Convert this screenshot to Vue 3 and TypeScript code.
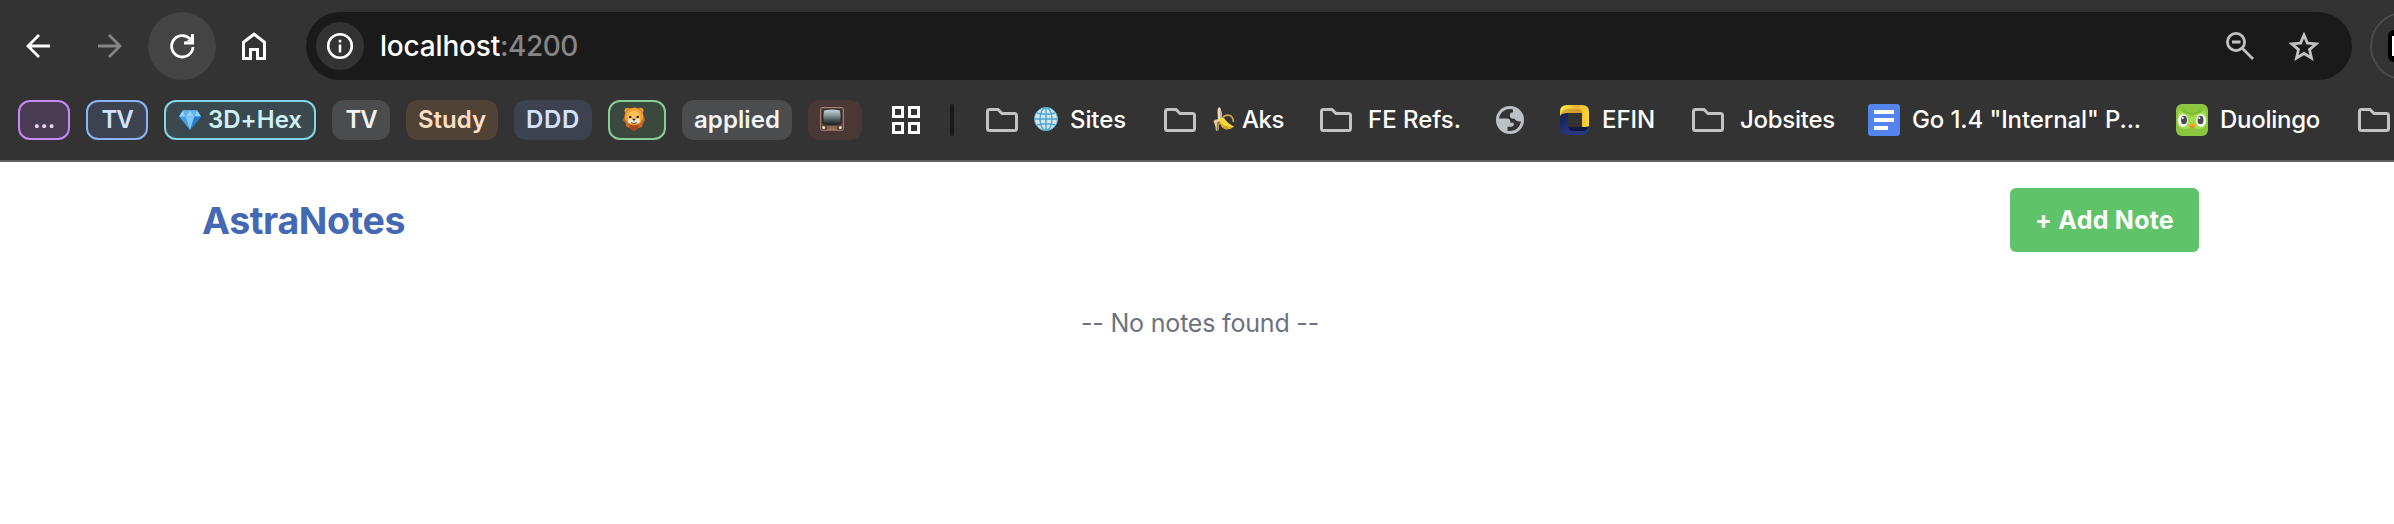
<script setup lang="ts">
import type { Directive } from 'vue'

interface Chip {
  label?: string
  icon?: 'gem' | 'lion' | 'tv'
  tone: string
  width: number
  textWidth: number
}

interface Bookmark {
  icon: 'folder' | 'world' | 'efin' | 'doc' | 'duo'
  emoji?: 'globe' | 'banana'
  label?: string
  width: number
  textWidth: number
}

const chips: Chip[] = [
  { label: '...', tone: 'purple outlined', width: 52, textWidth: 22 },
  { label: 'TV', tone: 'blue outlined', width: 62, textWidth: 31 },
  { label: '3D+Hex', icon: 'gem', tone: 'cyan outlined', width: 152, textWidth: 94 },
  { label: 'TV', tone: 'grey', width: 58, textWidth: 31 },
  { label: 'Study', tone: 'orange', width: 92, textWidth: 68 },
  { label: 'DDD', tone: 'blue', width: 78, textWidth: 54 },
  { icon: 'lion', tone: 'green outlined', width: 58, textWidth: 0 },
  { label: 'applied', tone: 'grey', width: 110, textWidth: 86 },
  { icon: 'tv', tone: 'red', width: 54, textWidth: 0 },
]

const bookmarks: Bookmark[] = [
  { icon: 'folder', emoji: 'globe', label: 'Sites', width: 178, textWidth: 56 },
  { icon: 'folder', emoji: 'banana', label: 'Aks', width: 156, textWidth: 42 },
  { icon: 'folder', label: 'FE Refs.', width: 176, textWidth: 93 },
  { icon: 'world', width: 64, textWidth: 0 },
  { icon: 'efin', label: 'EFIN', width: 132, textWidth: 53 },
  { icon: 'folder', label: 'Jobsites', width: 176, textWidth: 95 },
  { icon: 'doc', label: 'Go 1.4 "Internal" P...', width: 308, textWidth: 229 },
  { icon: 'duo', label: 'Duolingo', width: 182, textWidth: 100 },
  { icon: 'folder', width: 36, textWidth: 0 },
]

// Spreads letter spacing so that a label takes the given advance width.
const vFit: Directive<HTMLElement, number> = {
  mounted(el, { value }) {
    const count = (el.textContent ?? '').length
    const natural = el.getBoundingClientRect().width
    if (count) el.style.letterSpacing = `${(value - natural) / count}px`
  },
}
</script>

<template>
  <div class="window">
    <header class="chrome">
      <div class="toolbar">
        <svg class="nav back" viewBox="0 0 28 28"><path d="M26 14H4M15 3L4 14l11 11" /></svg>
        <svg class="nav forward" viewBox="0 0 28 28"><path d="M0 14h22M11 3l11 11-11 11" /></svg>
        <div class="reload">
          <svg class="nav" viewBox="0 0 28 28">
            <path d="M25 15A10.7 10.7 0 1 1 21.8 6.6L24.5 9.3" />
            <path class="solid" d="M23 2h3v10.5H16v-3h7z" />
            <path class="solid" d="M18 9.5h7v-5z" />
          </svg>
        </div>
        <svg class="home" viewBox="0 0 24 28"><path d="M1.5 10.2L12 2.2l10.5 8V26.5H15.5V17.5H8.5V26.5H1.5z" /></svg>
        <div class="omnibox">
          <div class="info">
            <svg viewBox="0 0 28 28">
              <circle cx="14" cy="14" r="11.8" />
              <path d="M14 12.6V20.5M14 7.8V10.4" />
            </svg>
          </div>
          <div class="url"><span v-fit="120">localhost</span><span v-fit="78" class="port">:4200</span></div>
          <svg class="lens" viewBox="0 0 28 28">
            <circle cx="10" cy="10" r="8.6" />
            <path d="M16 16L27 27M6 10h8.5" />
          </svg>
          <svg class="star" viewBox="0 0 32 30">
            <path d="M16 4L19.4 12.1 28.2 12.8 21.5 18.6 23.5 27 16 22.5 8.5 27 10.5 18.6 3.8 12.8 12.6 12.1z" />
          </svg>
        </div>
        <div class="extension"><div class="extension-icon"><i></i></div></div>
      </div>

      <nav class="bookmarks">
        <div class="chips">
          <div v-for="(chip, i) in chips" :key="i" class="chip" :class="chip.tone" :style="{ width: chip.width + 'px' }">
            <svg v-if="chip.icon === 'gem'" class="gem" viewBox="0 0 24 22">
              <path fill="#429bea" d="M5 1.3h14l4 6.2L12 21 1 7.5z" />
              <path fill="#91d3fc" d="M5 1.3L7.5 7.5H1zM19 1.3L16.5 7.5H23zM12 1.3L7.5 7.5h9z" />
              <path fill="#5cb5f5" d="M5 1.3h7L7.5 7.5zM19 1.3h-7l4.5 6.2z" />
              <path fill="#80c7fa" d="M7.5 7.5h9L12 21z" />
              <path fill="#257bd0" d="M16.5 7.5H23L12 21z" />
            </svg>
            <svg v-else-if="chip.icon === 'lion'" class="lion" viewBox="0 0 24 26">
              <circle cx="5.5" cy="4.8" r="3" fill="#dda337" /><circle cx="18.5" cy="4.8" r="3" fill="#dda337" />
              <path fill="#c86b24" d="M12 1.6C17 1.5 20 4 21.2 8L23 14l-2 3-1 4-4 1-4 3-4-3-3.500-1-1-4L1 14l2-6C4 4 7 1.700 12 1.600z" />
              <path fill="#f3a332" d="M12 2c5 0 8 3 9 7 .8 5-3 10-9 10S2.200 14 3 9c1-4 4-7 9-7z" />
              <path fill="#ffc557" d="M12 5c4 0 6 2.500 6 6.500S15 18 12 18s-6-2.500-6-6.500S8 5 12 5z" />
              <path fill="#a74620" d="M7 18.500L12 20l5-1.500-2 5-3 1.800-3-2z" />
              <ellipse cx="9.300" cy="15" rx="3.200" ry="2.400" fill="#f7e9cf" /><ellipse cx="14.700" cy="15" rx="3.200" ry="2.400" fill="#f7e9cf" />
              <circle cx="8.300" cy="11" r="1.300" fill="#37251c" /><circle cx="15.700" cy="11" r="1.300" fill="#37251c" />
              <path fill="#49291e" d="M9.800 12.800h4.400L12 15z" />
              <path fill="none" stroke="#49291e" stroke-width=".8" d="M9 16.500q3 2 6 0" />
            </svg>
            <svg v-else-if="chip.icon === 'tv'" class="tube" viewBox="0 0 24 24">
              <defs>
                <linearGradient id="screen" x1="0" y1="0" x2="0" y2="1">
                  <stop offset="0" stop-color="#c7d8d6" /><stop offset=".45" stop-color="#82918f" /><stop offset="1" stop-color="#1d2526" />
                </linearGradient>
              </defs>
              <rect x=".6" y=".6" width="22.800" height="22.600" rx="1.500" fill="#5a3d35" stroke="#a58873" />
              <path fill="#222928" d="M3 2.500Q12 .8 21 2.500q2 7 0 14.500-9 2-18 0-2-7.500 0-14.500z" />
              <path fill="url(#screen)" d="M4 3.500q8-1.800 16 0 1.400 6 0 12.200-8 2-16 0-1.400-6.200 0-12.200z" />
              <path stroke="#b49a83" stroke-width="1" d="M7 20h10M7 22h10" />
              <circle cx="3.600" cy="20.500" r="1.500" fill="#efe5d5" /><circle cx="20.400" cy="20.500" r="1.500" fill="#efe5d5" />
            </svg>
            <span v-if="chip.label" v-fit="chip.textWidth">{{ chip.label }}</span>
          </div>
        </div>

        <svg class="apps" viewBox="0 0 28 28"><path d="M1.500 1.500h9v9h-9zM17.500 1.500h9v9h-9zM1.500 17.500h9v9h-9zM17.500 17.500h9v9h-9z" /></svg>
        <div class="separator"></div>

        <div v-for="(item, i) in bookmarks" :key="i" class="bookmark" :class="item.icon" :style="{ width: item.width + 'px' }">
          <svg v-if="item.icon === 'folder'" class="folder-icon" viewBox="0 0 32 24">
            <path d="M3.500 1.500H12l4 4H28.500q2 0 2 2v13q0 2-2 2h-25q-2 0-2-2v-17q0-2 2-2z" />
          </svg>
          <svg v-else-if="item.icon === 'world'" class="world-icon" viewBox="0 0 28 28">
            <circle cx="14" cy="14" r="14" fill="#bdc1c6" />
            <path fill="#333" d="M17 3.400C9.500 1.500 4 6.300 3 12.600h7.500c2.800 0 4 1.400 4 4.200h2.800c1.300 1.300.2 3.900-1.800 3.900h-4v4c6.800 1.600 12.500-3 13.400-9.200-3.600.3-5.200-.5-6.300-2.700-3.300.3-5-.8-4.700-3.700.1-2.200 1.200-2.700 3.100-2.700z" />
          </svg>
          <svg v-else-if="item.icon === 'efin'" class="efin-icon" viewBox="0 0 30 30">
            <defs>
              <linearGradient id="gold" x1="0" y1="0" x2="1" y2="0"><stop offset="0" stop-color="#ffef42" /><stop offset=".6" stop-color="#e8b335" /><stop offset="1" stop-color="#ffda35" /></linearGradient>
              <linearGradient id="navy" x1="0" y1="0" x2="1" y2="1"><stop offset="0" stop-color="#101b49" /><stop offset=".5" stop-color="#243579" /><stop offset="1" stop-color="#26387f" /></linearGradient>
            </defs>
            <path fill="url(#navy)" d="M0 11q0-4 8-4v15h21v1q0 7-7 7H7q-7 0-7-7z" />
            <path fill="#11183f" d="M8 20v2h20q-1 4-6 4h-8q-6 0-6-6z" />
            <path fill="url(#gold)" d="M0 11V7q0-7 7-7h15q7 0 7 7v14q-1 1-7 1V8H7q-6 0-7 3z" />
            <path fill="#c78b2e" opacity=".6" d="M8 4h10q4 0 4 4H7q-5 0-7 3 1-7 8-7z" />
          </svg>
          <svg v-else-if="item.icon === 'doc'" class="square-icon" viewBox="0 0 32 32">
            <rect width="32" height="32" rx="3" fill="#5383ec" />
            <path fill="#fff" d="M6 6h20v4H6zM6 14h20v4H6zM6 22h14v4H6z" />
          </svg>
          <svg v-else class="square-icon" viewBox="0 0 32 32">
            <rect width="32" height="32" rx="6" fill="#8cc63f" />
            <path fill="#79b533" d="M5 5q5 4 11 4t11-4l-4 5H9z" />
            <path fill="#a1dc4d" d="M3 5q2 3 6 4 4 1 7 4 3-3 7-4 4-1 6-4l2 12q-1 8-8 8-5 0-7-4-2 4-7 4-7 0-8-8z" />
            <ellipse cx="7" cy="16.500" rx="5" ry="6.500" fill="#fff" /><ellipse cx="25" cy="16.500" rx="5" ry="6.500" fill="#fff" />
            <ellipse cx="8" cy="16" rx="3" ry="4.300" fill="#4b4b4b" /><ellipse cx="24.500" cy="16" rx="3" ry="4.300" fill="#4b4b4b" />
            <circle cx="6.700" cy="14" r="1.100" fill="#fff" /><circle cx="23.300" cy="14" r="1.100" fill="#fff" />
            <path fill="#f7a62b" d="M12.500 21q3.500-3.500 7 0l-3.500 4z" /><path fill="#e88430" d="M13 22h6l-3 3z" />
          </svg>

          <svg v-if="item.emoji === 'globe'" class="emoji globe" viewBox="0 0 24 24">
            <circle cx="12" cy="12" r="11.500" fill="#d4e6ed" stroke="#5fb1da" />
            <path fill="none" stroke="#4ba5d4" stroke-width="1.400" d="M12 .5v23M.5 12h23M3 6q9 2.500 18 0M3 18q9-2.500 18 0" />
            <ellipse cx="12" cy="12" rx="6" ry="11.500" fill="none" stroke="#4ba5d4" stroke-width="1.300" />
          </svg>
          <svg v-else-if="item.emoji === 'banana'" class="emoji banana" viewBox="0 0 24 24">
            <path fill="none" stroke="#cda74b" stroke-width="1.700" d="M11 10c5-4 10-1.500 10.500 5" />
            <path fill="#eadbb5" d="M6 14L5.500 3Q6-.4 8 .6q2 3 2.200 12z" />
            <path fill="#c9b48a" d="M8 1q2 5 2.200 12L8 14z" />
            <path fill="#e6ce99" d="M1.500 14q3-3 7-1l1 2q-3 1-3 8.300L4 24q-.5-6-2.500-10z" />
            <path fill="#9c7c4a" d="M5 15l4-1q-3 3-2.500 9L4.500 24z" />
            <path fill="#f8d53a" d="M7.500 13Q9 9 12 11q3 5 10 8.500-4 3.500-9 2.500-5-2-5.500-9z" />
            <path fill="#d3a62a" d="M8 15q3 5 13.500 5-4 3-9 2-4-2-4.500-7z" />
          </svg>
          <span v-if="item.label" v-fit="item.textWidth">{{ item.label }}</span>
        </div>
      </nav>
    </header>

    <main class="page">
      <div class="page-header">
        <h1><span v-fit="203">AstraNotes</span></h1>
        <button type="button"><span v-fit="139">+ Add Note</span></button>
      </div>
      <p class="empty"><span v-fit="238">-- No notes found --</span></p>
    </main>
  </div>
</template>

<style>
body {
  margin: 0;
  background: #fff;
  overflow: hidden;
}
</style>

<style scoped>
* {
  box-sizing: border-box;
}
.window {
  width: 2394px;
  height: 524px;
  overflow: hidden;
  background: #fff;
  font-family: Inter, "Liberation Sans", sans-serif;
}
svg {
  display: block;
  flex: none;
}
span {
  white-space: pre;
}
.chrome {
  height: 162px;
  background: #333;
  border-bottom: 2px solid #5f5c5f;
  overflow: hidden;
}
.toolbar {
  display: flex;
  align-items: center;
  height: 68px;
  margin-top: 12px;
  padding-left: 24px;
}
.nav {
  width: 28px;
  height: 28px;
  fill: none;
  stroke: #fff;
  stroke-width: 2.8;
}
.forward {
  margin-left: 46px;
  stroke: #858585;
}
.reload {
  display: flex;
  align-items: center;
  justify-content: center;
  flex: none;
  width: 68px;
  height: 68px;
  margin-left: 22px;
  border-radius: 50%;
  background: #444;
}
.solid {
  fill: #fff;
  stroke: none;
}
.home {
  width: 24px;
  height: 28px;
  margin-left: 26px;
  fill: none;
  stroke: #fff;
  stroke-width: 3;
}
.omnibox {
  display: flex;
  align-items: center;
  flex: none;
  width: 2046px;
  height: 68px;
  margin-left: 40px;
  padding: 0 32px 0 10px;
  border-radius: 34px;
  background: #1a1a1a;
}
.info {
  display: flex;
  align-items: center;
  justify-content: center;
  width: 48px;
  height: 48px;
  border-radius: 50%;
  background: #333;
}
.info svg {
  width: 28px;
  height: 28px;
  fill: none;
  stroke: #fff;
  stroke-width: 2.6;
}
.url {
  display: flex;
  flex: 1;
  margin-left: 16px;
  color: #fff;
  font-size: 28px;
  font-weight: 500;
  line-height: 40px;
}
.port {
  color: #858585;
}
.lens {
  width: 28px;
  height: 28px;
  margin-right: 34px;
  fill: none;
  stroke: #c2c2c2;
  stroke-width: 2.8;
}
.star {
  width: 32px;
  height: 30px;
  fill: none;
  stroke: #c2c2c2;
  stroke-width: 2.8;
}
.extension {
  display: flex;
  align-items: center;
  flex: none;
  width: 120px;
  height: 68px;
  margin-left: 18px;
  padding-left: 16px;
  border: 2px solid #4c4c4c;
  border-radius: 34px;
}
.extension-icon {
  width: 32px;
  height: 32px;
  padding: 6px 4px;
  border-radius: 6px;
  background: #000;
}
.extension-icon i {
  display: block;
  height: 20px;
  background: #fff;
}
.bookmarks {
  display: flex;
  align-items: center;
  height: 80px;
  padding-left: 18px;
}
.chips {
  display: flex;
  gap: 16px;
}
.chip {
  display: flex;
  flex: none;
  align-items: center;
  justify-content: center;
  height: 40px;
  border-radius: 12px;
  font-size: 24px;
  font-weight: 600;
  line-height: 36px;
}
.outlined {
  border: 2px solid;
}
.purple { background: #493b53; border-color: #c58af9; }
.blue { background: #3c4250; border-color: #8ab4f8; }
.cyan { background: #3a494d; border-color: #84d6e6; }
.grey { background: #4b4c4e; }
.orange { background: #504234; }
.green { background: #3b483d; border-color: #8bcb98; }
.red { background: #4b3735; }
.purple span { color: #ecd7ff; }
.blue span { color: #d5e2ff; }
.cyan span { color: #cef0f8; }
.grey span { color: #f1f3f4; }
.orange span { color: #fddfc5; }
.gem {
  width: 24px;
  height: 22px;
  margin-right: 6px;
}
.lion {
  width: 24px;
  height: 26px;
  margin: 0 6px 2px 0;
}
.tube {
  width: 24px;
  height: 24px;
  margin: 0 6px 2px 0;
}
.apps {
  width: 28px;
  height: 28px;
  margin-left: 30px;
  fill: none;
  stroke: #fff;
  stroke-width: 3;
}
.separator {
  flex: none;
  width: 4px;
  height: 32px;
  margin: 0 32px 0 30px;
  border-radius: 2px;
  background: #1a1a1a;
}
.bookmark {
  display: flex;
  flex: none;
  align-items: center;
  gap: 12px;
  color: #fff;
  font-size: 24px;
  font-weight: 500;
  line-height: 36px;
}
.folder {
  gap: 16px;
}
.folder-icon {
  width: 32px;
  height: 24px;
  fill: none;
  stroke: #c2c2c2;
  stroke-width: 3;
}
.world-icon {
  width: 28px;
  height: 28px;
}
.efin-icon {
  width: 30px;
  height: 30px;
}
.square-icon {
  width: 32px;
  height: 32px;
}
.emoji {
  width: 24px;
  height: 24px;
  margin-bottom: 2px;
}
.globe {
  margin-right: -4px;
}
.banana {
  margin-right: -10px;
}
.page {
  padding: 26px 195px 0 202px;
}
.page-header {
  display: flex;
  align-items: center;
  justify-content: space-between;
}
h1 {
  margin: 2px 0 0;
  color: #4468b4;
  font-size: 37.5px;
  font-weight: 700;
  line-height: 48px;
}
button {
  display: flex;
  align-items: center;
  justify-content: center;
  width: 189px;
  height: 64px;
  padding: 0;
  border: 0;
  border-radius: 6px;
  background: #5fc36a;
  color: #fff;
  font: 700 25px/36px Inter, "Liberation Sans", sans-serif;
}
.empty {
  margin: 53px 0 0;
  padding-right: 1px;
  color: #6b7280;
  font-size: 25px;
  line-height: 36px;
  text-align: center;
}
</style>
